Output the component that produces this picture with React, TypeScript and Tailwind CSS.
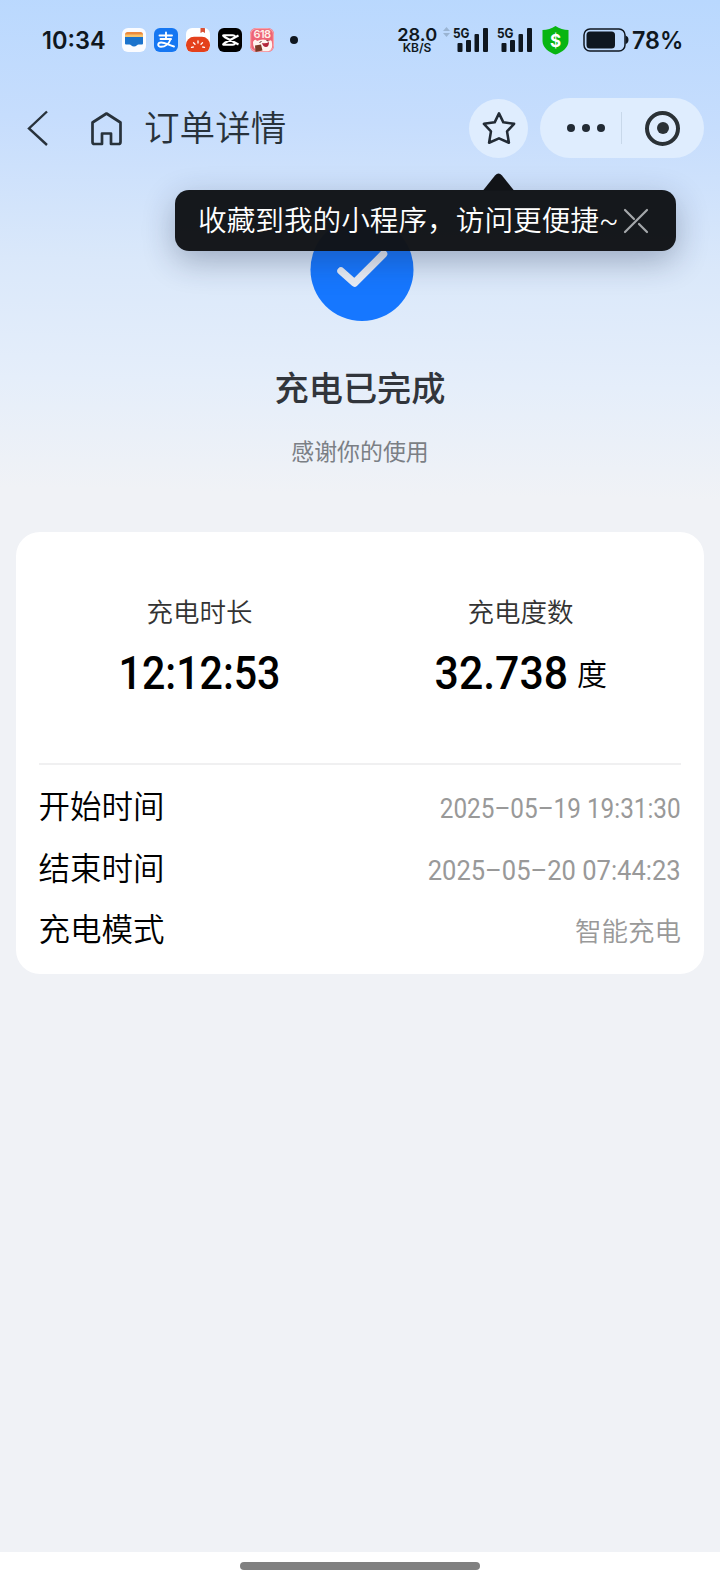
import React from "react";

const cjk = "font-['Roboto','Noto_Sans_CJK_SC',sans-serif]";

function AppIcons() {
  return (
    <div className="flex gap-2">
      <svg width="24" height="24" viewBox="0 0 24 24">
        <rect width="24" height="24" rx="6" fill="#fbfcff" />
        <path d="M3 9V6.500Q3 4 5.500 4h13Q21 4 21 6.500V9z" fill="#ee8a3c" />
        <path d="M3 6.500h18V9.500H3z" fill="#f8c46c" />
        <path d="M3 9h18v6.500q0 1-1 1h-3.500q-1 0-1.500 .7-3 2.600-6 0-.5-.7-1.500-.7H4q-1 0-1-1z" fill="#1b73cc" />
      </svg>
      <svg width="24" height="24" viewBox="0 0 24 24">
        <rect width="24" height="24" rx="6" fill="#1677f2" />
        <g fill="none" stroke="#fff" strokeWidth="1.900" strokeLinecap="round">
          <path d="M5.500 7.500h12.500M12 4.500V11M6.500 11h10.500" />
          <path d="M16.500 11.200C15 16 11 18.800 7 18.800c-4 0-3.500-4.300.2-4.300 4.300 0 7.300 2.600 12.800 4" />
        </g>
      </svg>
      <svg width="24" height="24" viewBox="0 0 24 24">
        <defs>
          <clipPath id="tomato"><rect width="24" height="24" rx="6" /></clipPath>
        </defs>
        <g clipPath="url(#tomato)">
          <rect width="24" height="24" fill="#fff" />
          <path d="M14.500 0h4.500v5l-2.200-1.300L14.500 5z" fill="#d95236" />
          <rect x="0" y="8.800" width="24" height="17" rx="8" fill="#e4411c" />
          <path d="M5.500 19.300l1.800-.3M7.500 14.700l1.500 1.500M12 13v2M16.500 14.700l-1.500 1.500M18.500 19.300l-1.800-.3" stroke="#fff" strokeWidth="1.300" strokeLinecap="round" />
        </g>
      </svg>
      <svg width="24" height="24" viewBox="0 0 24 24">
        <rect width="24" height="24" rx="6" fill="#000" />
        <path d="M20.500 7.500L6.500 15Q4 16.800 6 16.800H14.500q2.500 0 2.500-2M20.500 16.500L6.500 9Q4 7.200 6 7.200H14.500q2.500 0 2.500 2" fill="none" stroke="#fff" strokeWidth="2" strokeLinejoin="round" />
      </svg>
      <div className="relative size-6 overflow-hidden rounded-[6px] bg-[#ee6475]">
        <svg className="absolute inset-0" width="24" height="24" viewBox="0 0 24 24">
          <rect x=".6" y=".6" width="22.800" height="22.800" rx="5.500" fill="none" stroke="#f6a0a8" strokeWidth="1.200" />
          <path d="M3 14q2-4 4-1 6-3 12 0 3-2 3 2 1 6-3 8H8q-5-2-5-9z" fill="#fff3ee" />
          <path d="M12 15q4 1 7-1 0 5-3 5t-4-4z" fill="#b3263b" />
          <path d="M9.500 14.500l2-1M16.500 12.500l2 .5" stroke="#552a26" strokeWidth="1" />
          <path d="M5 17.500l6-1 1.500 6-7 1.500z" fill="#7a3b27" />
        </svg>
        <span className="absolute inset-x-0 top-0 text-center font-['Inter',sans-serif] text-[11px] leading-[12px] font-semibold tracking-[-0.5px] text-[#fff0ea]">618</span>
      </div>
    </div>
  );
}

function Signal() {
  return (
    <div className="relative h-6 w-[36px]">
      <span className="absolute top-0 left-0 origin-left scale-x-[0.88] font-['Inter',sans-serif] text-[13.500px] leading-[10px] font-bold text-[#0f1720]">5G</span>
      <svg className="absolute inset-0" width="36" height="24" viewBox="0 0 36 24" fill="#0f1720">
        <rect x="4.500" y="15" width="5" height="9" rx="1" />
        <rect x="13" y="12" width="5" height="12" rx="1" />
        <rect x="21.500" y="6" width="4.500" height="18" rx="1" />
        <rect x="30" y="0" width="5" height="24" rx="1" />
      </svg>
    </div>
  );
}

function StatusBar() {
  return (
    <div className="flex h-20 items-center pl-[42px] text-[#0f1720]">
      <span className="w-[80px] pt-px font-['Inter',sans-serif] text-[24px] leading-6 font-semibold">
        <span className="inline-block origin-left scale-x-[0.98]">10:34</span>
      </span>
      <AppIcons />
      <span className="ml-[16px] size-2 rounded-full bg-[#0f1720]" />
      <div className="ml-[99px] flex w-[40px] flex-col items-center font-['Inter',sans-serif]">
        <span className="origin-center scale-x-[1.04] text-[17.500px] leading-[16px] font-semibold">28.0</span>
        <span className="text-[12px] leading-[10px] font-semibold">KB/S</span>
      </div>
      <svg className="mt-[-16px] ml-[6px]" width="7" height="10" viewBox="0 0 7 10" fill="#9ab4d2">
        <path d="M0 4l3.500-4L7 4zM0 6h7L3.500 10z" />
      </svg>
      <div className="ml-[3px] flex gap-2">
        <Signal />
        <Signal />
      </div>
      <svg className="ml-[9px]" width="27" height="29" viewBox="0 0 27 29">
        <path d="M13.500 0q6 4 13 4v11c0 7-7 11.500-13 13.500C7.500 26.500.5 22 .5 15V4q7 0 13-4z" fill="#08b511" />
        <text x="13.500" y="20.500" textAnchor="middle" fontSize="17" fontWeight="700" fontFamily="Inter" fill="#fff">$</text>
      </svg>
      <svg className="ml-[14px]" width="46" height="24" viewBox="0 0 46 24">
        <rect x="1" y="1" width="41" height="22" rx="6" fill="none" stroke="#0f1720" strokeWidth="1.500" />
        <rect x="3.500" y="3.500" width="28.500" height="17" rx="3.500" fill="#0f1720" />
        <path d="M42.500 7.500q3 1 3 4.300t-3 4.300z" fill="#0f1720" />
      </svg>
      <span className="ml-[3px] origin-left scale-x-[0.97] pt-px font-['Inter',sans-serif] text-[24px] leading-6 font-semibold">78%</span>
    </div>
  );
}

function NavBar() {
  return (
    <div className="flex h-24 items-center pl-[27px]">
      <svg width="22" height="36" viewBox="0 0 22 36" fill="none" stroke="#28323b" strokeWidth="2.400">
        <path d="M20 1.500L2 18.500l18 16.500" />
      </svg>
      <svg className="ml-[41px]" width="34" height="36" viewBox="0 0 34 36" fill="none" stroke="#28323b" strokeWidth="2.700" strokeLinejoin="round">
        <path d="M2.500 12.500L16.500 3.500l14 9V32q0 2-2 2H21V23.500h-9v10.500H4.500q-2 0-2-2z" />
      </svg>
      <span className="ml-[20px] pt-[2px] text-[35.600px] leading-[40px] font-[350] whitespace-nowrap text-[#28323b]">订单详情</span>
      <div className="ml-auto flex items-center pr-4">
        <div className="grid size-[59px] place-items-center rounded-full bg-[#dfedfe]">
          <svg width="34" height="36" viewBox="0 0 36 38" fill="none" stroke="#222b35" strokeWidth="2.700" strokeLinejoin="round">
            <path d="M18 3.500l4.600 9.500 11.400 1.600-7.500 8 2 12L18 30 7.500 34.600l2-12-7.500-8L13.400 13z" />
          </svg>
        </div>
        <div className="ml-[12px] flex h-[60px] w-[164px] items-center rounded-full bg-[#dfedfe]">
          <div className="flex w-[81px] gap-[7px] pl-[27px]">
            <span className="size-2 rounded-full bg-[#222b35]" />
            <span className="size-2 rounded-full bg-[#222b35]" />
            <span className="size-2 rounded-full bg-[#222b35]" />
          </div>
          <span className="h-8 w-px bg-[#c8d8ea]" />
          <div className="ml-[23px] grid size-[35px] place-items-center rounded-full border-4 border-[#2a3136]">
            <span className="size-3 rounded-full bg-[#2a3136]" />
          </div>
        </div>
      </div>
    </div>
  );
}

function Tooltip() {
  return (
    <div className="absolute top-[190px] left-[175px] flex h-[61px] w-[501px] items-center rounded-[14px] bg-[#111317]/98 pl-[23px] shadow-[0_10px_32px_rgba(30,45,75,0.32)]">
      <svg className="absolute top-[-17px] left-[308px]" width="31" height="18" viewBox="0 0 31 18">
        <path d="M0 17.500L12 2.500q3.500-4 7 0L31 17.500z" fill="#111317" />
      </svg>
      <span className="pt-px text-[28.650px] leading-[36px] font-[350] whitespace-nowrap text-white">收藏到我的小程序，访问更便捷~</span>
      <svg className="absolute top-[18px] left-[448px]" width="26" height="26" viewBox="0 0 26 26" stroke="#a5a8ab" strokeWidth="2.200" strokeLinecap="round">
        <path d="M2 2l9 9M16 16l8 8M24 2L2 24" />
      </svg>
    </div>
  );
}

function Metric({ label, value, unit }: { label: string; value: string; unit?: string }) {
  return (
    <div className="flex flex-1 flex-col items-center">
      <span className="text-[26.500px] leading-[36px] font-[350] text-[#333]">{label}</span>
      <div className="mt-[17px] flex h-[50px] items-start justify-center text-black">
        {value.includes(":") ? (
          <span className="flex w-[160px] justify-center text-[47px] leading-[50px] font-medium">
            <span className="inline-block scale-x-[0.875]">{value}</span>
          </span>
        ) : (
          <span className="flex w-[134px] justify-center text-[47px] leading-[50px] font-medium">
            <span className="inline-block scale-x-[0.91]">{value}</span>
          </span>
        )}
        {unit && <span className="ml-[9px] pt-[2px] text-[30px] leading-[50px] font-[350]">{unit}</span>}
      </div>
    </div>
  );
}

function Row({ label, value, narrow }: { label: string; value: string; narrow?: boolean }) {
  const isDate = value.startsWith("2025");
  const width = !isDate ? "" : narrow ? "scale-x-[0.9]" : "scale-x-[0.945]";
  return (
    <div className="flex h-[61.500px] items-center justify-between">
      <span className="ml-[-0.500px] pt-px text-[31.500px] leading-[40px] font-[350] text-black">{label}</span>
      <span className={`inline-block origin-right pt-[3px] leading-[36px] text-[#999] ${isDate ? "text-[27px] font-[450]" : "text-[26.500px] font-[350]"} ${width}`}>
        {value.replaceAll("-", "–")}
      </span>
    </div>
  );
}

export default function App() {
  return (
    <div className={`relative flex h-[1584px] w-[720px] flex-col overflow-hidden bg-[#f0f2f6] bg-[linear-gradient(181deg,#b9d8fe_0px,#c6ddfd_128px,#dae8fa_270px,#e5eefa_390px,#f0f2f6_500px)] ${cjk}`}>
      <StatusBar />
      <NavBar />
      <div className="flex flex-col items-center pt-[42px]">
        <svg className="ml-[3px]" width="104" height="104" viewBox="0 0 104 104">
          <circle cx="52" cy="51.500" r="51.500" fill="#1677ff" />
          <path d="M31 53l13.500 12L73.500 36" fill="none" stroke="#e9edf5" strokeWidth="7.500" strokeLinecap="round" strokeLinejoin="round" />
        </svg>
        <h1 className="mt-[44px] text-[34.200px] leading-[46px] font-medium text-[#31353b]">充电已完成</h1>
        <p className="mt-[25px] text-[22.900px] leading-[32px] text-[#7b7f85]">感谢你的使用</p>
      </div>
      <div className="mx-4 mt-[63px] flex h-[442px] flex-col rounded-[24px] bg-white pt-[63px] pr-[23px] pl-[23px]">
        <div className="flex h-[168px]">
          <Metric label="充电时长" value="12:12:53" />
          <Metric label="充电度数" value="32.738" unit="度" />
        </div>
        <div className="h-[2px] bg-[#f0f0f1]" />
        <div className="pt-[12px]">
          <Row label="开始时间" value="2025-05-19 19:31:30" narrow />
          <Row label="结束时间" value="2025-05-20 07:44:23" />
          <Row label="充电模式" value="智能充电" />
        </div>
      </div>
      <div className="mt-auto flex h-[32px] justify-center bg-white pt-[10px]">
        <div className="h-2 w-[240px] rounded-full bg-[#808080]" />
      </div>
      <Tooltip />
    </div>
  );
}
